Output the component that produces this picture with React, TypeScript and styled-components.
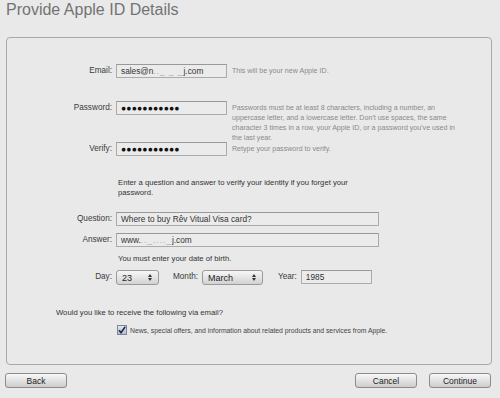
import styled, { createGlobalStyle } from "styled-components";

const GlobalStyle = createGlobalStyle`
  html, body {
    margin: 0;
    padding: 0;
    background: #e9e9e9;
  }
  body {
    font-family: "Liberation Sans", Arial, sans-serif;
    color: #222;
  }
`;

const Page = styled.div`
  width: 500px;
  height: 398px;
  overflow: hidden;
  display: flex;
  flex-direction: column;
`;

const Title = styled.h1`
  margin: 2px 0 0 6px;
  font-size: 16px;
  line-height: 16px;
  font-weight: normal;
  color: #737373;
`;

const Panel = styled.div`
  box-sizing: border-box;
  margin: 19px 0 0 6px;
  width: 486px;
  height: 328px;
  border: 1px solid #a8a8a8;
  border-radius: 4px;
  padding-top: 26px;
  display: flex;
  flex-direction: column;
`;

interface RowProps {
  $mt?: number;
}
const Row = styled.div<RowProps>`
  display: flex;
  align-items: flex-start;
  margin-top: ${(p) => p.$mt ?? 0}px;
`;

interface LabelProps {
  $ml?: number;
}
const Label = styled.span<LabelProps>`
  flex: none;
  width: ${(p) => (p.$ml === undefined ? "105px" : "auto")};
  margin-left: ${(p) => p.$ml ?? 0}px;
  margin-right: 4px;
  text-align: right;
  font-size: 8.2px;
  line-height: 14px;
  color: #3a3a3a;
`;

interface FieldProps {
  $w: number;
}
const Field = styled.div<FieldProps>`
  flex: none;
  box-sizing: border-box;
  width: ${(p) => p.$w}px;
  height: 14px;
  border: 1px solid #ababab;
  border-top-color: #999;
  background: #ebebeb;
  padding-left: 4px;
  font-size: 8.3px;
  line-height: 12px;
  color: #333;
  white-space: nowrap;
  overflow: hidden;
`;

const Dots = styled.span`
  font-size: 8.5px;
  letter-spacing: 0.2px;
  color: #111;
`;

const Blur = styled.span`
  color: #aaa;
  letter-spacing: 1px;
`;

const Hint = styled.div`
  width: 230px;
  margin-left: 5px;
  padding-top: 2px;
  font-size: 7.1px;
  line-height: 10px;
  color: #8a8a8a;
`;

interface TextProps {
  $ml: number;
  $mt: number;
  $w?: number;
}
const Text = styled.p<TextProps>`
  margin: ${(p) => p.$mt}px 0 0 ${(p) => p.$ml}px;
  width: ${(p) => (p.$w ? `${p.$w}px` : "auto")};
  font-size: 7.7px;
  line-height: 10px;
  color: #333;
`;

interface SelectProps {
  $w: number;
}
const Select = styled.div<SelectProps>`
  flex: none;
  box-sizing: border-box;
  width: ${(p) => p.$w}px;
  height: 15px;
  border: 1px solid #9a9a9a;
  border-radius: 3px;
  background: linear-gradient(#f7f7f7, #d2d2d2);
  display: flex;
  align-items: center;
  justify-content: space-between;
  padding: 0 6px 0 5px;
  font-size: 9px;
  color: #222;
`;

const Arrows = () => (
  <svg width="4" height="7" viewBox="0 0 4 7">
    <path d="M2 0 L4 3 H0 Z M2 7 L4 4 H0 Z" fill="#333" />
  </svg>
);

const CheckRow = styled.label`
  display: flex;
  align-items: center;
  margin: 7px 0 0 110px;
  font-size: 6.8px;
  color: #444;
`;

const Box = styled.span`
  box-sizing: border-box;
  width: 10px;
  height: 10px;
  margin-right: 3px;
  border: 1px solid #7f8694;
  background: linear-gradient(#e4e6ec, #b9bdc8);
  display: flex;
  align-items: center;
  justify-content: center;
`;

const Footer = styled.div`
  display: flex;
  align-items: center;
  margin-top: 8px;
  padding: 0 9px 0 5px;
`;

const Spacer = styled.div`
  flex: 1;
`;

interface ButtonProps {
  $ml?: number;
}
const Button = styled.button<ButtonProps>`
  box-sizing: border-box;
  width: 62px;
  height: 15px;
  margin-left: ${(p) => p.$ml ?? 0}px;
  padding: 0;
  border: 1px solid #8c8c8c;
  border-radius: 3px;
  background: linear-gradient(#f8f8f8, #cdcdcd);
  font-family: "Liberation Sans", Arial, sans-serif;
  font-size: 8.5px;
  color: #222;
`;

export default function App() {
  return (
    <>
      <GlobalStyle />
      <Page>
        <Title>Provide Apple ID Details</Title>
        <Panel>
          <Row>
            <Label>Email:</Label>
            <Field $w={111}>
              sales@n<Blur>.._ _ _</Blur>j.com
            </Field>
            <Hint>This will be your new Apple ID.</Hint>
          </Row>
          <Row $mt={23}>
            <Label>Password:</Label>
            <Field $w={111}>
              <Dots>●●●●●●●●●●●</Dots>
            </Field>
            <Hint>
              Passwords must be at least 8 characters, including a number, an
              uppercase letter, and a lowercase letter. Don't use spaces, the
              same character 3 times in a row, your Apple ID, or a password
              you've used in the last year.
            </Hint>
          </Row>
          <Row $mt={-1}>
            <Label>Verify:</Label>
            <Field $w={111}>
              <Dots>●●●●●●●●●●●</Dots>
            </Field>
            <Hint>Retype your password to verify.</Hint>
          </Row>
          <Text $ml={111} $mt={22} $w={262}>
            Enter a question and answer to verify your identity if you forget
            your password.
          </Text>
          <Row $mt={14}>
            <Label>Question:</Label>
            <Field $w={263}>Where to buy Rêv Vitual Visa card?</Field>
          </Row>
          <Row $mt={7}>
            <Label>Answer:</Label>
            <Field $w={263}>
              www.<Blur>.._...._</Blur>j.com
            </Field>
          </Row>
          <Text $ml={111} $mt={7}>
            You must enter your date of birth.
          </Text>
          <Row $mt={6}>
            <Label>Day:</Label>
            <Select $w={43}>
              23
              <Arrows />
            </Select>
            <Label $ml={14}>Month:</Label>
            <Select $w={61}>
              March
              <Arrows />
            </Select>
            <Label $ml={15}>Year:</Label>
            <Field $w={71}>1985</Field>
          </Row>
          <Text $ml={49} $mt={23}>
            Would you like to receive the following via email?
          </Text>
          <CheckRow>
            <Box>
              <svg width="8" height="8" viewBox="0 0 8 8">
                <path
                  d="M1 4.2 L3 6.6 L7.2 0.8"
                  stroke="#1d2a5a"
                  strokeWidth="1.6"
                  fill="none"
                />
              </svg>
            </Box>
            News, special offers, and information about related products and
            services from Apple.
          </CheckRow>
        </Panel>
        <Footer>
          <Button>Back</Button>
          <Spacer />
          <Button>Cancel</Button>
          <Button $ml={12}>Continue</Button>
        </Footer>
      </Page>
    </>
  );
}
